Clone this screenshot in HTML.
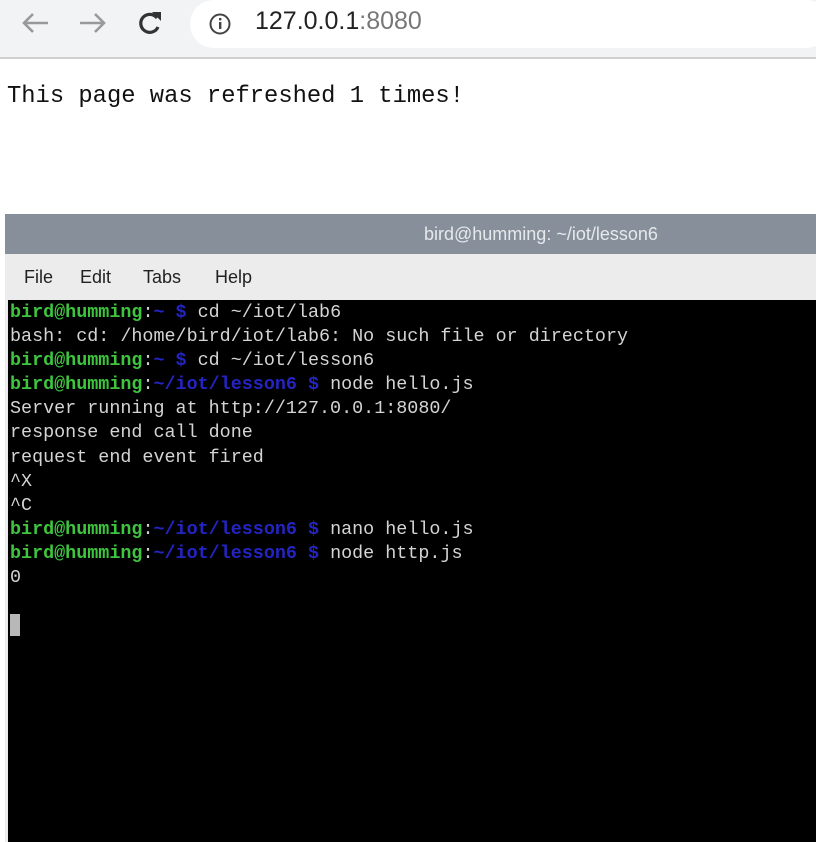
<!DOCTYPE html><html><head><style>
body{margin:0;width:816px;height:842px;overflow:hidden;background:#fff;position:relative;font-family:"Liberation Sans",sans-serif}
.bar{position:absolute;left:0;top:0;width:816px;height:57px;background:#f1f3f4;border-bottom:2px solid #d0d0d0}
.pill{position:absolute;left:190px;top:0;width:640px;height:48px;background:#fff;border-radius:24px}
.url{position:absolute;left:255px;top:7px;font-size:25px;color:#222}
.url span{color:#777}
.msg{position:absolute;left:7px;top:83px;font:23.8px "Liberation Mono",monospace;color:#111;white-space:pre}
.term{position:absolute;left:5px;top:214px;width:811px;height:628px;background:#ececec}
.title{height:40px;background:#87909a;color:#e6e9ec;font-size:18px;line-height:40px;padding-left:419px}
.menu{height:46px;font-size:18px;line-height:46px;color:#222;position:relative}
.menu span{position:absolute;top:0}
.scr{position:absolute;left:3px;top:86px;right:0;bottom:0;background:#000;font:18.4px/24.1px "Liberation Mono",monospace;color:#d4d4d4;white-space:pre;padding-top:1px;padding-left:2px}
.g{color:#3ec53e;font-weight:bold}.b{color:#2424c4;font-weight:bold}
.cur{display:inline-block;width:10px;height:22px;background:#b8b8b8;vertical-align:-5px}
</style></head><body>
<div class="bar"><div class="pill"></div>
<svg style="position:absolute;left:0;top:8px" width="180" height="32" viewBox="0 0 180 32"><g fill="none" stroke-width="2.6"><path d="M48 15H24M33 6L24 15L33 24" stroke="#999"/><path d="M80 15H104M95 6L104 15L95 24" stroke="#999"/><path d="M157 10A9 9 0 1 0 158 19" stroke="#333" stroke-width="3.2"/></g><path d="M152 4L161 4L161 13Z" fill="#333"/></svg>
<svg style="position:absolute;left:208px;top:12px" width="24" height="24"><circle cx="12" cy="12" r="9.5" fill="none" stroke="#444" stroke-width="2"/><rect x="11" y="10" width="2.4" height="7" fill="#444"/><rect x="11" y="6" width="2.4" height="2.4" fill="#444"/></svg>
<div class="url">127.0.0.1<span>:8080</span></div></div>
<div class="msg">This page was refreshed 1 times!</div>
<div class="term"><div class="title">bird@humming: ~/iot/lesson6</div>
<div class="menu"><span style="left:19px">File</span><span style="left:75px">Edit</span><span style="left:138px">Tabs</span><span style="left:210px">Help</span></div>
<div class="scr"><span class="g">bird@humming</span>:<span class="b">~ $</span> cd ~/iot/lab6
bash: cd: /home/bird/iot/lab6: No such file or directory
<span class="g">bird@humming</span>:<span class="b">~ $</span> cd ~/iot/lesson6
<span class="g">bird@humming</span>:<span class="b">~/iot/lesson6 $</span> node hello.js
Server running at http://127.0.0.1:8080/
response end call done
request end event fired
^X
^C
<span class="g">bird@humming</span>:<span class="b">~/iot/lesson6 $</span> nano hello.js
<span class="g">bird@humming</span>:<span class="b">~/iot/lesson6 $</span> node http.js
0

<span class="cur"></span></div></div>
</body></html>
